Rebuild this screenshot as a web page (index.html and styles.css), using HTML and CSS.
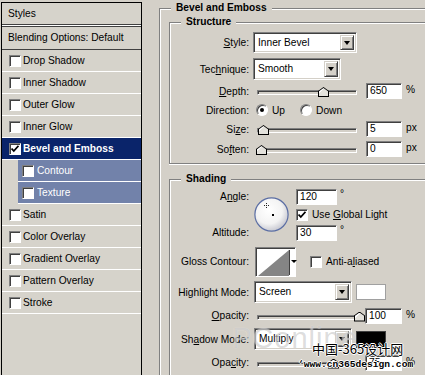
FILE: index.html
```html
<!DOCTYPE html>
<html lang="en">
<head>
  <meta charset="UTF-8">
  <meta name="viewport" content="width=device-width, initial-scale=1.0">
  <title>Layer Style - Bevel and Emboss</title>
  <link rel="stylesheet" href="styles.css">
</head>
<body>
  <div class="dialog">
    <div class="styles-list">
      <div class="list-head">Styles</div>
      <div class="list-blend">Blending Options: Default</div>
      <ul class="effects">
        <li class="effect"><span class="check"></span>Drop Shadow</li>
        <li class="effect"><span class="check"></span>Inner Shadow</li>
        <li class="effect"><span class="check"></span>Outer Glow</li>
        <li class="effect"><span class="check"></span>Inner Glow</li>
        <li class="effect is-active">
          <span class="check"><svg width="8" height="8" viewBox="0 0 8 8"><polyline points="0.5,3.5 2.8,6 7.5,0.8" fill="none" stroke="#000" stroke-width="1.8"/></svg></span>Bevel and Emboss
        </li>
        <li class="effect is-sub"><span class="check"></span>Contour</li>
        <li class="effect is-sub"><span class="check"></span>Texture</li>
        <li class="effect"><span class="check"></span>Satin</li>
        <li class="effect"><span class="check"></span>Color Overlay</li>
        <li class="effect"><span class="check"></span>Gradient Overlay</li>
        <li class="effect"><span class="check"></span>Pattern Overlay</li>
        <li class="effect"><span class="check"></span>Stroke</li>
      </ul>
    </div>

    <div class="options">
      <fieldset class="group">
        <legend>Bevel and Emboss</legend>

        <fieldset class="box box-structure">
          <legend>Structure</legend>
          <div class="row row-style">
            <span class="label"><u>S</u>tyle:</span>
            <div class="select select-style"><span class="select-text">Inner Bevel</span><span class="drop"></span></div>
          </div>
          <div class="row row-technique">
            <span class="label">Tec<u>h</u>nique:</span>
            <div class="select select-technique"><span class="select-text">Smooth</span><span class="drop"></span></div>
          </div>
          <div class="row row-slider">
            <span class="label"><u>D</u>epth:</span>
            <div class="slider"><span class="thumb" style="left: 60px"></span></div>
            <span class="num">650</span><span class="unit">%</span>
          </div>
          <div class="row row-direction">
            <span class="label">Direction:</span>
            <span class="radio is-on"></span><span class="radio-text text-up">Up</span>
            <span class="radio"></span><span class="radio-text">Down</span>
          </div>
          <div class="row row-slider">
            <span class="label">Si<u>z</u>e:</span>
            <div class="slider"><span class="thumb" style="left: 0px"></span></div>
            <span class="num">5</span><span class="unit">px</span>
          </div>
          <div class="row row-slider row-soften">
            <span class="label">So<u>f</u>ten:</span>
            <div class="slider"><span class="thumb" style="left: -2px"></span></div>
            <span class="num">0</span><span class="unit">px</span>
          </div>
        </fieldset>

        <fieldset class="box box-shading">
          <legend>Shading</legend>
          <div class="angle-grid">
            <span class="label angle-label">A<u>n</u>gle:</span>
            <div class="dial">
              <svg width="35" height="35" viewBox="0 0 35 35">
                <defs>
                  <radialGradient id="dialShade" cx="42%" cy="38%" r="62%">
                    <stop offset="0" stop-color="#ffffff"/>
                    <stop offset="0.65" stop-color="#f3f3f3"/>
                    <stop offset="1" stop-color="#c9cad2"/>
                  </radialGradient>
                </defs>
                <circle cx="17.5" cy="17.5" r="16.6" fill="url(#dialShade)" stroke="#5b6ea4" stroke-width="1.2"/>
                <line x1="12.5" y1="6" x2="12.5" y2="11" stroke="#222" stroke-width="1" stroke-dasharray="1 1"/>
                <line x1="10" y1="8.5" x2="15" y2="8.5" stroke="#222" stroke-width="1" stroke-dasharray="1 1"/>
                <rect x="18" y="17" width="2" height="2" fill="#000"/>
              </svg>
            </div>
            <div class="angle-field"><span class="num num-short">120</span><span class="unit unit-deg">°</span></div>
            <div class="angle-global">
              <span class="check check-form"><svg width="8" height="8" viewBox="0 0 8 8"><polyline points="0.5,3.5 2.8,6 7.5,0.8" fill="none" stroke="#000" stroke-width="1.8"/></svg></span>
              <span class="check-text">Use <u>G</u>lobal Light</span>
            </div>
            <span class="label altitude-label">Altitude:</span>
            <div class="altitude-field"><span class="num num-short">30</span><span class="unit unit-deg">°</span></div>
          </div>

          <div class="row row-gloss">
            <span class="label">Gloss Contour:</span>
            <div class="contour">
              <svg class="contour-curve" width="31" height="26" viewBox="0 0 31 26" preserveAspectRatio="none">
                <rect width="31" height="26" fill="#fff"/>
                <polygon points="0,26 31,0 31,26" fill="#858585"/>
              </svg>
              <span class="contour-drop"></span>
            </div>
            <span class="check check-form check-anti"></span><span class="check-text">Anti-a<u>l</u>iased</span>
          </div>

          <div class="row row-mode">
            <span class="label">Highlight Mode:</span>
            <div class="select select-mode"><span class="select-text">Screen</span><span class="drop"></span></div>
            <span class="swatch"></span>
          </div>
          <div class="row row-slider row-opacity">
            <span class="label"><u>O</u>pacity:</span>
            <div class="slider"><span class="thumb" style="left: 96px"></span></div>
            <span class="num">100</span><span class="unit">%</span>
          </div>
          <div class="row row-mode row-shadow">
            <span class="label">Sh<u>a</u>dow Mode:</span>
            <div class="select select-mode"><span class="select-text">Multiply</span><span class="drop"></span></div>
            <span class="swatch swatch-dark"></span>
          </div>
          <div class="row row-slider row-opacity2">
            <span class="label">Opa<u>c</u>ity:</span>
            <div class="slider"><span class="thumb" style="left: 70px"></span></div>
            <span class="num">75</span><span class="unit">%</span>
          </div>
        </fieldset>
      </fieldset>
    </div>

    <div class="mark-brand">PConline</div>
    <div class="mark-site">中国-365设计网</div>
    <div class="mark-url">‘www.cn365design.com</div>
  </div>
</body>
</html>
```

FILE: styles.css
```css
body {
  margin: 0;
  width: 425px;
  height: 375px;
  overflow: hidden;
  background: #d4d0c8;
  font-family: 'Liberation Sans', Arial, sans-serif;
  font-size: 10.2px;
  color: #000;
}
.dialog {
  position: relative;
  display: flex;
  height: 375px;
}

/* left list of effects */
.styles-list {
  flex: none;
  width: 139px;
  margin: 2px 0 0 1px;
  border: 1px solid #000;
  border-bottom: none;
  background: #d6d3cb;
}
.list-head {
  height: 21px;
  line-height: 21px;
  padding-left: 6px;
  border-bottom: 1px solid #404040;
  margin-bottom: 1px;
  box-shadow: 0 1px 0 #fff;
}
.list-blend {
  height: 22px;
  line-height: 22px;
  padding-left: 6px;
  border-top: 1px solid #404040;
  border-bottom: 1px solid #404040;
}
.effects {
  list-style: none;
  margin: 0;
  padding: 0;
}
.effect {
  display: flex;
  align-items: center;
  height: 21px;
  padding-left: 7px;
  border-bottom: 1px solid #fff;
}
.effect.is-active {
  background: #0a246a;
  color: #fff;
  font-weight: bold;
}
.effect.is-sub {
  margin-left: 16px;
  padding-left: 4px;
  background: #7282aa;
  color: #fff;
}
.effect.is-sub .check {
  margin-right: 3px;
}
.check {
  flex: none;
  display: flex;
  align-items: center;
  justify-content: center;
  box-sizing: border-box;
  width: 12px;
  height: 12px;
  margin-right: 2px;
  background: #fff;
  border: 1px solid;
  border-color: #808080 #fff #fff #808080;
  box-shadow: inset 1px 1px 0 #404040;
}

/* right side */
.options {
  flex: 1;
  margin-left: 17px;
  padding-top: 1px;
}
fieldset {
  margin: 0;
  min-width: 0;
  border: 1px solid #808080;
  border-right: none;
}
legend {
  padding: 0 5px;
  line-height: 14px;
  font-weight: bold;
  background: #d4d0c8;
}
.group {
  width: 320px;
  height: 400px;
  padding: 0 0 0 9px;
  border-bottom: none;
  box-shadow: inset 1px 1px 0 #fff;
}
.group > legend {
  margin-left: 2px;
}
.box {
  width: 300px;
  padding: 3px 0 5px 0;
  box-shadow: inset 1px 1px 0 #fff, 0 1px 0 #fff;
}
.box > legend {
  margin-left: 11px;
}
.box-shading {
  margin-top: 8px;
  padding-top: 2px;
}

.row {
  display: flex;
  align-items: center;
}
.label {
  flex: none;
  width: 79px;
  margin-right: 4px;
  text-align: right;
  white-space: nowrap;
}
.row-style { height: 21px; }
.row-technique { height: 22px; margin-top: 5px; }
.row-slider { height: 18px; }
.row-technique + .row-slider { margin-top: 2px; }
.row-direction { height: 20px; }
.row-soften { margin-top: 2px; }

/* selects */
.select {
  display: flex;
  box-sizing: border-box;
  height: 100%;
  background: #fff;
  border: 1px solid;
  border-color: #808080 #fff #fff #808080;
  box-shadow: inset 1px 1px 0 #404040, inset -1px -1px 0 #d4d0c8;
  padding: 2px 2px 2px 1px;
}
.select-style { width: 104px; }
.select-technique { width: 88px; }
.select-mode { width: 98px; margin-left: 1px; }
.select-text {
  flex: 1;
  padding-left: 3px;
  line-height: 16px;
}
.drop {
  position: relative;
  flex: none;
  width: 14px;
  box-sizing: border-box;
  background: #d4d0c8;
  border: 1px solid;
  border-color: #d4d0c8 #404040 #404040 #d4d0c8;
  box-shadow: inset 1px 1px 0 #fff, inset -1px -1px 0 #808080;
}
.drop::after {
  content: '';
  position: absolute;
  left: 3px;
  top: 50%;
  margin-top: -2px;
  border-left: 3.5px solid transparent;
  border-right: 3.5px solid transparent;
  border-top: 4px solid #000;
}

/* sliders and number fields */
.slider {
  position: relative;
  flex: none;
  box-sizing: border-box;
  width: 100px;
  height: 5px;
  margin: 3px 0 0 4px;
  background: #d4d0c8;
  border: 1px solid;
  border-color: #808080 #fff #fff #808080;
  box-shadow: inset 1px 1px 0 #404040;
}
.thumb {
  position: absolute;
  bottom: -3px;
  width: 11px;
  height: 10px;
  background: #000;
  clip-path: polygon(0 40%, 50% 0, 100% 40%, 100% 100%, 0 100%);
}
.thumb::after {
  content: '';
  position: absolute;
  left: 1px;
  top: 1px;
  right: 1px;
  bottom: 1px;
  background: linear-gradient(135deg, #fff 0 30%, #e4e2dc 30%);
  clip-path: polygon(0 40%, 50% 0, 100% 40%, 100% 100%, 0 100%);
}
.num {
  flex: none;
  box-sizing: border-box;
  width: 36px;
  height: 16px;
  margin-left: 9px;
  padding-left: 3px;
  line-height: 14px;
  background: #fff;
  border: 1px solid;
  border-color: #808080 #fff #fff #808080;
  box-shadow: inset 1px 1px 0 #404040;
}
.num-short {
  width: 41px;
  margin-left: 0;
}
.unit {
  margin-left: 4px;
  align-self: flex-start;
  margin-top: 2px;
}
.unit-deg {
  margin-left: 3px;
  margin-top: -1px;
}

/* radio buttons */
.radio {
  flex: none;
  position: relative;
  box-sizing: border-box;
  width: 12px;
  height: 12px;
  margin-left: 3px;
  border-radius: 50%;
  background: #fff;
  border: 1px solid;
  border-color: #808080 #fff #fff #808080;
  box-shadow: inset 1px 1px 0 #404040;
}
.radio.is-on::after {
  content: '';
  position: absolute;
  left: 3px;
  top: 3px;
  width: 4px;
  height: 4px;
  border-radius: 50%;
  background: #000;
}
.radio-text {
  margin-left: 4px;
}
.radio-text.text-up {
  margin-right: 12px;
}

/* shading block */
.angle-grid {
  display: grid;
  grid-template-columns: 79px 47px 1fr;
  grid-template-rows: 17px 19px 17px;
  align-items: center;
}
.angle-label { grid-row: 1; grid-column: 1; margin-right: 0; }
.altitude-label { grid-row: 3; grid-column: 1; margin-right: 0; }
.dial {
  grid-row: 1 / 4;
  grid-column: 2;
  align-self: start;
  margin: 9px 0 0 5px;
  height: 35px;
}
.angle-field, .altitude-field {
  display: flex;
  align-items: center;
  grid-column: 3;
}
.angle-field { grid-row: 1; }
.altitude-field { grid-row: 3; }
.angle-global {
  grid-row: 2;
  grid-column: 3;
  display: flex;
  align-items: center;
}
.check-form {
  margin-right: 4px;
}
.check-text {
  white-space: nowrap;
}

.row-gloss {
  height: 31px;
  margin-top: 5px;
}
.contour {
  flex: none;
  display: flex;
  box-sizing: border-box;
  width: 41px;
  height: 30px;
  margin-left: 2px;
  background: #fff;
  border: 1px solid;
  border-color: #808080 #fff #fff #808080;
  box-shadow: inset 1px 1px 0 #404040;
  padding: 2px 1px 1px 2px;
}
.contour-curve {
  display: block;
}
.contour-drop {
  position: relative;
  flex: 1;
  border-left: 1px solid #404040;
}
.contour-drop::after {
  content: '';
  position: absolute;
  left: 1px;
  top: 50%;
  margin-top: -2px;
  border-left: 3px solid transparent;
  border-right: 3px solid transparent;
  border-top: 3px solid #000;
}
.check-anti {
  margin-left: 14px;
}

.row-mode {
  height: 22px;
  margin-top: 4px;
}
.swatch {
  flex: none;
  box-sizing: border-box;
  width: 30px;
  height: 16px;
  margin-left: 4px;
  background: #fff;
  border: 1px solid #a0a0a0;
}
.swatch-dark {
  height: 17px;
  background: #000;
  border-color: #404040;
}
.row-opacity { height: 17px; margin-top: 4px; }
.row-shadow { margin-top: 4px; }
.row-opacity2 { height: 17px; margin-top: 4px; }
.row-opacity .num, .row-opacity2 .num { margin-left: 8px; width: 37px; }

/* watermark laid over the dialog */
.mark-brand {
  position: absolute;
  left: 232px;
  top: 322px;
  font-size: 29px;
  letter-spacing: 1px;
  color: rgba(140, 140, 140, 0.3);
  text-shadow: 0 0 1px rgba(255, 255, 255, 0.6);
}
.mark-site {
  position: absolute;
  left: 312px;
  top: 340px;
  font-family: 'Noto Sans CJK SC', sans-serif;
  font-size: 13px;
  line-height: 17px;
  color: #000;
  text-shadow: 1px 0 #fff, -1px 0 #fff, 0 1px #fff, 0 -1px #fff;
}
.mark-url {
  position: absolute;
  left: 298px;
  top: 358px;
  font-family: 'Liberation Mono', monospace;
  font-size: 9.6px;
  font-weight: bold;
  line-height: 14px;
  color: #000;
  text-shadow: 1px 0 #fff, -1px 0 #fff, 0 1px #fff, 0 -1px #fff;
}
```
